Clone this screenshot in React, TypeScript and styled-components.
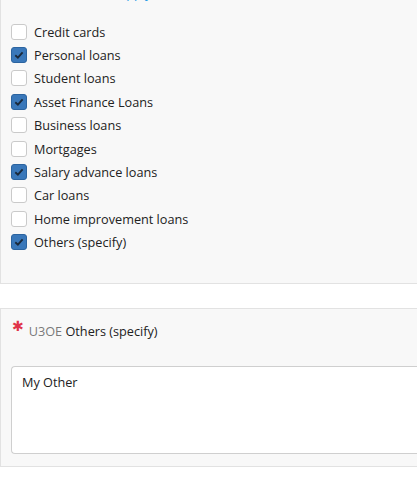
import React from "react";
import styled, { createGlobalStyle } from "styled-components";

const GlobalStyle = createGlobalStyle`
  html, body {
    margin: 0;
    padding: 0;
    background: #ffffff;
    overflow: hidden;
  }
  body {
    font-family: "Open Sans", "Noto Sans", sans-serif;
    font-size: 12.7px;
    color: #222222;
  }
`;

const options = [
  { label: "Credit cards", checked: false },
  { label: "Personal loans", checked: true },
  { label: "Student loans", checked: false },
  { label: "Asset Finance Loans", checked: true },
  { label: "Business loans", checked: false },
  { label: "Mortgages", checked: false },
  { label: "Salary advance loans", checked: true },
  { label: "Car loans", checked: false },
  { label: "Home improvement loans", checked: false },
  { label: "Others (specify)", checked: true },
];

const Page = styled.div`
  width: 440px;
  display: flex;
  flex-direction: column;
`;

const Panel = styled.section`
  background: #f8f8f8;
  border: 1px solid #e2e2e2;
  border-right: none;
`;

const ListPanel = styled(Panel)`
  margin-top: -18px;
  padding: 0 10px 29px;
`;

const Hint = styled.div`
  line-height: 20px;
  color: #1e9be6;
  padding-left: 26px;
`;

const List = styled.div`
  margin-top: 17px;
  display: flex;
  flex-direction: column;
`;

const Row = styled.label`
  height: 23.4px;
  display: flex;
  align-items: center;
  gap: 7px;
`;

const Box = styled.span<{ $checked: boolean }>`
  width: 16px;
  height: 16px;
  box-sizing: border-box;
  border-radius: 3px;
  border: 1px solid ${(p) => (p.$checked ? "#2c64a0" : "#cacaca")};
  background: ${(p) => (p.$checked ? "#3a78ba" : "#ffffff")};
  display: flex;
  align-items: center;
  justify-content: center;
`;

const Text = styled.span`
  line-height: 18px;
  color: #222222;
`;

const Spacer = styled.div`
  height: 24px;
`;

const FieldPanel = styled(Panel)`
  padding: 12px 0 12px 10px;
`;

const Label = styled.div`
  line-height: 20px;
  display: flex;
  align-items: flex-start;
  gap: 5px;
`;

const Star = styled.span`
  color: #e0334a;
  font-family: "DejaVu Sans", sans-serif;
  font-size: 14px;
  font-weight: 700;
  line-height: 12px;
  margin-top: -1px;
  padding-left: 1px;
`;

const Code = styled.span`
  color: #7a7a7a;
`;

const Input = styled.div`
  margin-top: 25px;
  height: 88px;
  box-sizing: border-box;
  background: #ffffff;
  border: 1px solid #cfcfcf;
  border-right: none;
  border-radius: 4px 0 0 4px;
  padding: 6px 10px;
  line-height: 18px;
  color: #222222;
`;

const Check = () => (
  <svg width="12" height="12" viewBox="0 0 12 12">
    <path d="M2.3 6.2 L4.9 8.6 L9.6 3.4" fill="none" stroke="#1b2a3c" strokeWidth="1.9" />
  </svg>
);

export default function App() {
  return (
    <>
      <GlobalStyle />
      <Page>
        <ListPanel>
          <Hint>Select all that apply</Hint>
          <List>
            {options.map((o) => (
              <Row key={o.label}>
                <Box $checked={o.checked}>{o.checked && <Check />}</Box>
                <Text>{o.label}</Text>
              </Row>
            ))}
          </List>
        </ListPanel>
        <Spacer />
        <FieldPanel>
          <Label>
            <Star>✱</Star>
            <span>
              <Code>U3OE</Code> Others (specify)
            </span>
          </Label>
          <Input>My Other</Input>
        </FieldPanel>
      </Page>
    </>
  );
}
